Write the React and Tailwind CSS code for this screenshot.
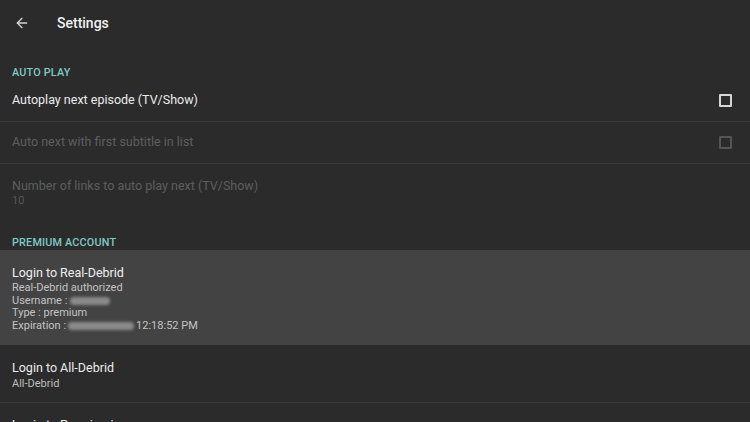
import React from 'react';
import { ArrowLeft } from 'lucide-react';

const font = { fontFamily: 'Roboto, "Noto Sans", sans-serif' };

const Blur = ({ w }) => (
  <span className={`inline-block h-[8px] ${w} rounded-full bg-[#8a8a8a] blur-[1.5px] align-middle`} />
);

const Check = ({ disabled }) => (
  <div
    className={`w-[13px] h-[13px] rounded-[1px] border-2 ${
      disabled ? 'border-[#555555]' : 'border-[#d6d6d6]'
    }`}
  />
);

const SectionHeader = ({ children, className }) => (
  <div className={`flex items-end px-3 ${className}`}>
    <span className="text-[10.8px] font-medium tracking-[0.2px] text-[#7fcac2] leading-[14px]">
      {children}
    </span>
  </div>
);

export default function App() {
  return (
    <div className="w-[750px] h-[422px] overflow-hidden bg-[#2b2b2b] text-[#ececec]" style={font}>
      {/* Header */}
      <div className="flex items-center h-[45px] px-[14px] pt-[1px] gap-[27px]">
        <ArrowLeft size={16} strokeWidth={2} className="text-[#d4d4d4]" />
        <span className="text-[14px] font-medium text-[#f2f2f2]">Settings</span>
      </div>

      <SectionHeader className="h-[35px]">AUTO PLAY</SectionHeader>

      <div className="flex items-center justify-between h-[42px] px-3 pr-[18px] border-b border-[#3a3a3a]">
        <span className="text-[12.5px] text-[#ececec]">Autoplay next episode (TV/Show)</span>
        <Check />
      </div>

      <div className="flex items-center justify-between h-[42px] px-3 pr-[18px] border-b border-[#3a3a3a]">
        <span className="text-[12.5px] text-[#5e5e5e]">Auto next with first subtitle in list</span>
        <Check disabled />
      </div>

      <div className="flex flex-col px-3 pt-[14px] pb-[14px]">
        <span className="text-[12.5px] leading-[16px] text-[#5e5e5e]">
          Number of links to auto play next (TV/Show)
        </span>
        <span className="text-[11px] leading-[13px] text-[#575757]">10</span>
      </div>

      <SectionHeader className="h-[29px]">PREMIUM ACCOUNT</SectionHeader>

      <div className="flex flex-col h-[95px] bg-[#434343] px-3 pt-[13px]">
        <span className="text-[12.5px] leading-[19px] text-[#f0f0f0]">Login to Real-Debrid</span>
        <div className="flex flex-col text-[11px] leading-[12.7px] text-[#c4c4c4]">
          <span>Real-Debrid authorized</span>
          <span className="flex items-center gap-[3px]">
            Username : <Blur w="w-[40px]" />
          </span>
          <span>Type : premium</span>
          <span className="flex items-center gap-[2px]">
            Expiration : <Blur w="w-[66px]" /> 12:18:52 PM
          </span>
        </div>
      </div>

      <div className="flex flex-col h-[58px] px-3 pt-[14px] border-b border-[#3a3a3a]">
        <span className="text-[12.5px] leading-[18px] text-[#ececec]">Login to All-Debrid</span>
        <span className="text-[11px] leading-[13px] text-[#bdbdbd]">All-Debrid</span>
      </div>

      <div className="flex flex-col px-3 pt-[14px]">
        <span className="text-[12.5px] leading-[16px] text-[#ececec]">Login to Premiumize</span>
      </div>
    </div>
  );
}
